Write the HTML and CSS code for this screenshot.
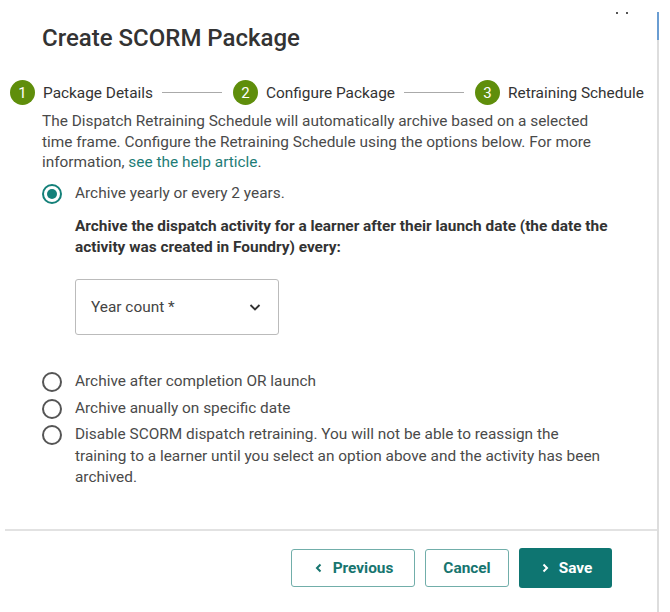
FILE: index.html
```html
<!DOCTYPE html>
<html lang="en">
<head>
    <meta charset="UTF-8">
    <meta name="viewport" content="width=device-width, initial-scale=1.0">
    <title>Create SCORM Package</title>
    <link rel="stylesheet" href="styles.css">
</head>
<body>
    <div class="dialog">
        <span class="close-dots"><i></i><i></i></span>

        <h1 class="dialog-title">Create SCORM Package</h1>

        <!-- Stepper -->
        <div class="stepper">
            <span class="step-num">1</span>
            <span class="step-label">Package Details</span>
            <span class="step-line"></span>
            <span class="step-num">2</span>
            <span class="step-label">Configure Package</span>
            <span class="step-line"></span>
            <span class="step-num">3</span>
            <span class="step-label">Retraining Schedule</span>
        </div>

        <div class="content">
            <p class="intro">The Dispatch Retraining Schedule will automatically archive based on a selected time frame. Configure the Retraining Schedule using the options below. For more information, <a href="#">see the help article</a>.</p>

            <label class="radio-row">
                <span class="radio checked"></span>
                <span class="radio-text">Archive yearly or every 2 years.</span>
            </label>

            <div class="sub-option">
                <p class="sub-title">Archive the dispatch activity for a learner after their launch date (the date the activity was created in Foundry) every:</p>
                <div class="select-box">
                    <span>Year count *</span>
                    <svg width="14" height="14" viewBox="0 0 14 14"><path d="M2.5 5l4.5 4.5 4.5-4.5" fill="none" stroke="#333" stroke-width="1.8"/></svg>
                </div>
            </div>

            <div class="radio-list">
                <label class="radio-row">
                    <span class="radio"></span>
                    <span class="radio-text">Archive after completion OR launch</span>
                </label>
                <label class="radio-row">
                    <span class="radio"></span>
                    <span class="radio-text">Archive anually on specific date</span>
                </label>
                <label class="radio-row">
                    <span class="radio"></span>
                    <span class="radio-text">Disable SCORM dispatch retraining. You will not be able to reassign the training to a learner until you select an option above and the activity has been archived.</span>
                </label>
            </div>
        </div>

        <div class="footer">
            <button class="btn btn-outline">
                <svg width="12" height="12" viewBox="0 0 12 12"><path d="M7.5 2.5L4 6l3.5 3.5" fill="none" stroke="currentColor" stroke-width="2"/></svg>
                Previous
            </button>
            <button class="btn btn-outline btn-cancel">Cancel</button>
            <button class="btn btn-primary">
                <svg width="12" height="12" viewBox="0 0 12 12"><path d="M4.5 2.5L8 6 4.5 9.5" fill="none" stroke="currentColor" stroke-width="2"/></svg>
                Save
            </button>
        </div>
    </div>

    <div class="scrollbar"><div class="scroll-thumb"></div></div>
</body>
</html>
```

FILE: styles.css
```css
/* General Reset */
body {
    margin: 0;
    font-family: Roboto, "Liberation Sans", sans-serif;
    background-color: #fff;
    color: #444;
    display: flex;
    height: 612px;
    overflow: hidden;
}

/* Dialog */
.dialog {
    flex: 1;
    margin-left: 5px;
    position: relative;
}

.close-dots {
    position: absolute;
    top: 12px;
    right: 29px;
    display: flex;
    gap: 8px;
}

.close-dots i {
    width: 2px;
    height: 2px;
    background-color: #555;
}

.dialog-title {
    margin: 23px 0 0 37px;
    font-size: 24px;
    line-height: 30px;
    font-weight: 500;
    color: #333;
}

/* Stepper */
.stepper {
    display: flex;
    align-items: center;
    margin: 27px 0 0 5px;
    height: 25px;
}

.step-num {
    width: 25px;
    height: 25px;
    border-radius: 50%;
    background-color: #5f8e0b;
    color: #fff;
    font-size: 15px;
    display: flex;
    align-items: center;
    justify-content: center;
    flex-shrink: 0;
}

.step-label {
    margin-left: 8px;
    font-size: 15.4px;
    color: #333;
    white-space: nowrap;
}

.step-line {
    width: 60px;
    height: 1px;
    background-color: #aaa;
    margin: 0 11px 0 9px;
}

/* Content */
.content {
    padding: 0 40px 0 37px;
}

.intro {
    margin: 6px 0 0;
    font-size: 15.4px;
    line-height: 20.5px;
    color: #4a4a4a;
}

.intro a {
    color: #1d7c76;
    text-decoration: none;
}

.radio-row {
    display: flex;
    align-items: flex-start;
    font-size: 15.4px;
    line-height: 21.5px;
    color: #4a4a4a;
    margin-top: 10px;
}

.radio {
    width: 20px;
    height: 20px;
    box-sizing: border-box;
    border: 2px solid #555;
    border-radius: 50%;
    margin: 1px 13px 0 0;
    flex-shrink: 0;
    display: flex;
    align-items: center;
    justify-content: center;
}

.radio.checked {
    border-color: #148079;
}

.radio.checked::after {
    content: "";
    width: 10px;
    height: 10px;
    border-radius: 50%;
    background-color: #148079;
}

.sub-option {
    padding-left: 33px;
}

.sub-title {
    margin: 12px 0 0;
    font-size: 15.4px;
    line-height: 20.5px;
    font-weight: bold;
    color: #333;
}

.select-box {
    margin-top: 22px;
    width: 204px;
    height: 56px;
    box-sizing: border-box;
    border: 1px solid #bbb;
    border-radius: 3px;
    display: flex;
    align-items: center;
    justify-content: space-between;
    padding: 0 16px 0 15px;
    font-size: 15.4px;
    color: #444;
}

.radio-list {
    margin: 36px 4px 0 0;
    display: flex;
    flex-direction: column;
    gap: 5px;
}

.radio-list .radio-row {
    margin-top: 0;
}

/* Footer */
.footer {
    margin-top: 40px;
    border-top: 2px solid #e2e2e2;
    display: flex;
    justify-content: flex-end;
    gap: 10px;
    padding: 17px 45px 0 0;
}

.btn {
    height: 38px;
    margin-top: 1px;
    box-sizing: border-box;
    border-radius: 3px;
    font-family: Roboto, "Liberation Sans", sans-serif;
    font-size: 15.4px;
    font-weight: bold;
    display: flex;
    align-items: center;
    justify-content: center;
    gap: 8px;
    cursor: pointer;
}

.btn-outline {
    background-color: #fff;
    border: 1px solid #71aeaa;
    color: #17756f;
    width: 124px;
}

.btn-cancel {
    width: 84px;
}

.btn-primary {
    background-color: #0e7571;
    border: none;
    color: #fff;
    width: 93px;
    height: 40px;
    margin-top: 0;
}

/* Scrollbar */
.scrollbar {
    width: 2px;
    margin: 12px 11px 0 0;
    background-color: #ddd;
}

.scroll-thumb {
    height: 28px;
    background-color: #6a9dd2;
}
```
